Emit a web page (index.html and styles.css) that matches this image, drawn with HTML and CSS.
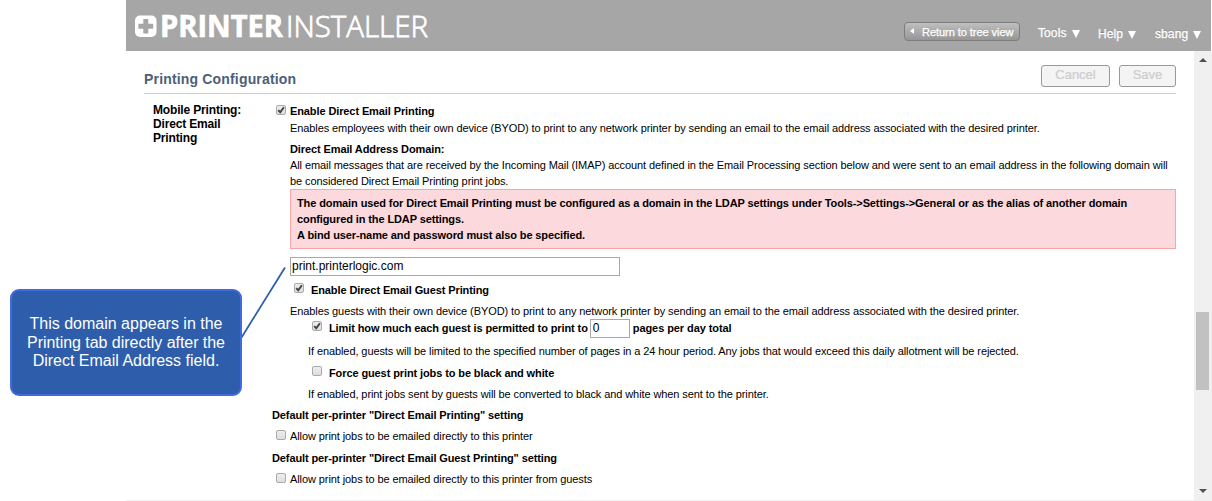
FILE: index.html
```html
<!DOCTYPE html>
<html lang="en">
<head>
<meta charset="utf-8">
<title>Printer Installer</title>
<link rel="stylesheet" href="styles.css">
</head>
<body>
<svg class="defs" width="0" height="0"><defs>
<symbol id="tick" viewBox="0 0 10 10"><path d="M2.2 5.2 L4.2 7.2 L7.9 2.3" fill="none" stroke="#404040" stroke-width="1.9"/></symbol>
</defs></svg>
<div class="app">
  <header class="header">
    <svg class="logo" width="300" height="51" viewBox="0 -12 300 51">
      <rect x="1" y="3.5" width="21.5" height="21.5" rx="5" fill="#fff"/>
      <path d="M9.3 7h5v4.7h4.9v5h-4.9v4.9h-5v-4.9H4.4v-5h4.9z" fill="#a6a6a6"/>
      <text class="logo-bold" x="26" y="25" textLength="123" lengthAdjust="spacingAndGlyphs">PRINTER</text>
      <text class="logo-light" x="152" y="25" textLength="142" lengthAdjust="spacingAndGlyphs">INSTALLER</text>
    </svg>
    <nav class="nav">
      <span class="return"><i class="left-arrow"></i><span class="return-text">Return to tree view</span></span>
      <span class="menu menu-tools">Tools <i class="caret"></i></span>
      <span class="menu menu-help">Help <i class="caret"></i></span>
      <span class="menu menu-user">sbang <i class="caret"></i></span>
    </nav>
  </header>
  <div class="body">
    <main class="main">
      <div class="title-bar">
        <h1 class="title">Printing Configuration</h1>
        <div class="actions"><span class="button cancel">Cancel</span><span class="button save">Save</span></div>
      </div>
      <div class="columns">
        <div class="section-name">Mobile Printing:<br>Direct Email<br>Printing</div>
        <div class="form">
          <div class="row"><span class="check"><svg><use href="#tick"/></svg></span><b>Enable Direct Email Printing</b></div>
          <div class="row in gap1">Enables employees with their own device (BYOD) to print to any network printer by sending an email to the email address associated with the desired printer.</div>
          <div class="row in gap5"><b>Direct Email Address Domain:</b></div>
          <div class="row in">All email messages that are received by the Incoming Mail (IMAP) account defined in the Email Processing section below and were sent to an email address in the following domain will</div>
          <div class="row in">be considered Direct Email Printing print jobs.</div>
          <div class="alert">
            <div class="row"><b>The domain used for Direct Email Printing must be configured as a domain in the LDAP settings under Tools-&gt;Settings-&gt;General or as the alias of another domain</b></div>
            <div class="row"><b>configured in the LDAP settings.</b></div>
            <div class="row"><b>A bind user-name and password must also be specified.</b></div>
          </div>
          <div class="field domain">print.printerlogic.com</div>
          <div class="row guest gap6"><span class="check"><svg><use href="#tick"/></svg></span><b>Enable Direct Email Guest Printing</b></div>
          <div class="row in gap5">Enables guests with their own device (BYOD) to print to any network printer by sending an email to the email address associated with the desired printer.</div>
          <div class="row sub limit"><span class="check"><svg><use href="#tick"/></svg></span><b>Limit how much each guest is permitted to print to</b><span class="field count">0</span><b class="per-day">pages per day total</b></div>
          <div class="row note gap5">If enabled, guests will be limited to the specified number of pages in a 24 hour period. Any jobs that would exceed this daily allotment will be rejected.</div>
          <div class="row sub gap6"><span class="check"></span><b>Force guest print jobs to be black and white</b></div>
          <div class="row note gap5">If enabled, print jobs sent by guests will be converted to black and white when sent to the printer.</div>
          <div class="row gap5"><b>Default per-printer "Direct Email Printing" setting</b></div>
          <div class="row gap5"><span class="check"></span>Allow print jobs to be emailed directly to this printer</div>
          <div class="row gap6"><b>Default per-printer "Direct Email Guest Printing" setting</b></div>
          <div class="row gap5"><span class="check"></span>Allow print jobs to be emailed directly to this printer from guests</div>
        </div>
      </div>
    </main>
    <div class="scrollbar"><i class="up"></i><i class="thumb"></i><i class="down"></i></div>
  </div>
</div>
<svg class="pointer" width="50" height="80" viewBox="0 0 50 80"><path d="M1.5 76.5L45 6.5" stroke="#2e5eab" stroke-width="1.8"/></svg>
<div class="callout"><span>This domain appears in the</span><span class="tight">Printing tab directly after the</span><span>Direct Email Address field.</span></div>
</body>
</html>
```

FILE: styles.css
```css
* { box-sizing: border-box; }
body { margin: 0; width: 1212px; height: 501px; overflow: hidden; background: #fff; color: #000; font: 11px/16px "Liberation Sans", Arial, sans-serif; }
.defs { position: absolute; }
.app { margin-left: 126px; width: 1086px; height: 501px; display: flex; flex-direction: column; }
.header { width: 1085px; height: 51px; background: #a6a6a6; display: flex; justify-content: space-between; flex: none; }
.logo { margin-left: 8px; overflow: visible; }
.logo text { fill: #fff; stroke: #fff; font-family: "Open Sans", sans-serif; font-size: 30px; }
.logo .logo-bold { font-weight: 700; stroke-width: .7px; }
.logo .logo-light { font-weight: 300; stroke-width: .8px; }
.nav { display: flex; align-items: flex-start; color: #fff; padding-right: 10px; font-size: 12px; line-height: 16px; text-shadow: 0 -1px 0 rgba(0,0,0,.2); -webkit-text-stroke: .3px #fff; }
.return { display: flex; align-items: center; width: 116px; height: 19px; margin-top: 22px; padding-left: 5px; border: 1px solid #7d7d7d; border-radius: 4px; background: linear-gradient(#bfbfbf, #969696); font-size: 11px; }
.return-text { margin-left: 8px; white-space: nowrap; letter-spacing: -.05px; }
.left-arrow { border: 3.5px solid transparent; border-right: 4px solid #fff; border-left: 0; margin-top: -2px; }
.menu { display: flex; align-items: center; justify-content: space-between; letter-spacing: .1px; }
.caret { border: 4px solid transparent; border-top: 8px solid #fff; border-bottom: 0; margin-top: 1px; }
.menu-tools { width: 42px; margin: 25px 0 0 18px; }
.menu-help { width: 38px; margin: 26px 0 0 18px; }
.menu-user { width: 46px; margin: 26px 0 0 19px; }
.body { display: flex; flex: 1; }
.main { width: 1068px; flex: none; border-bottom: 1px solid #f0f0f0; padding: 0 18px; }
.title-bar { height: 43px; border-bottom: 1px solid #ccc; display: flex; justify-content: space-between; }
.title { margin: 20px 0 0; font-size: 14px; line-height: 16px; letter-spacing: .17px; color: #4c6079; white-space: nowrap; }
.actions { display: flex; gap: 9px; padding-top: 14px; }
.button { height: 22px; border: 1px solid #999; border-radius: 3px; background: #f4f4f4; color: #ccc; font-size: 13px; line-height: 18px; text-align: center; -webkit-text-stroke: .2px #ccc; }
.cancel { width: 69px; }
.save { width: 57px; }
.columns { display: flex; padding: 9px 0 0 9px; }
.section-name { width: 119px; flex: none; font-size: 12px; line-height: 14px; letter-spacing: -.16px; font-weight: 700; }
.form { flex: 1; min-width: 0; }
.row { display: flex; height: 16px; white-space: nowrap; letter-spacing: -.09px; }
.row b { letter-spacing: -.105px; }
.in, .guest { padding-left: 18px; }
.sub, .note { padding-left: 36px; }
.gap1 { margin-top: 1px; }
.gap5 { margin-top: 5px; }
.gap6 { margin-top: 6px; }
.check { flex: none; width: 10px; height: 10px; margin: 2px 4px 0 4px; border: 1px solid #aaa; border-radius: 2px; background: linear-gradient(#ededed, #dedede); }
.guest .check, .sub .check { margin: 1px 7px 0 4px; }
.check svg { display: block; width: 10px; height: 10px; margin: -1px; }
.alert { margin-left: 18px; height: 60px; padding: 5px 6px; border: 1px solid #f7a5a5; background: #fcd9dc; }
.field { border: 1px solid #a9a9a9; background: #fff; font-size: 12px; line-height: 17px; height: 19px; padding-left: 2px; white-space: nowrap; }
.domain { width: 330px; margin: 8px 0 0 18px; padding-left: 1px; }
.limit { height: 19px; line-height: 18px; }
.limit .check { margin-top: 2px; }
.limit .per-day { letter-spacing: -.08px; }
.count { width: 40px; margin: 0 3px 0 2px; }
.scrollbar { width: 18px; padding-right: 1px; background: #f0f0f0; display: flex; flex-direction: column; align-items: center; }
.up { border: 4px solid transparent; border-bottom: 4px solid #505050; border-top: 0; margin-top: 7px; }
.thumb { width: 13px; height: 78px; margin-top: 250px; background: #c1c1c1; }
.down { border: 4px solid transparent; border-top: 4px solid #505050; border-bottom: 0; margin-top: 99px; }
.pointer { position: absolute; left: 240px; top: 261px; }
.callout { position: absolute; left: 10px; top: 289px; width: 232px; height: 107px; padding-top: 1px; border: 2px solid #4169e1; border-radius: 9px; background: #2e5eab; color: #fff; font-size: 16px; line-height: 18.5px; display: flex; flex-direction: column; align-items: center; justify-content: center; white-space: nowrap; }
.tight { letter-spacing: -.04px; }
```
